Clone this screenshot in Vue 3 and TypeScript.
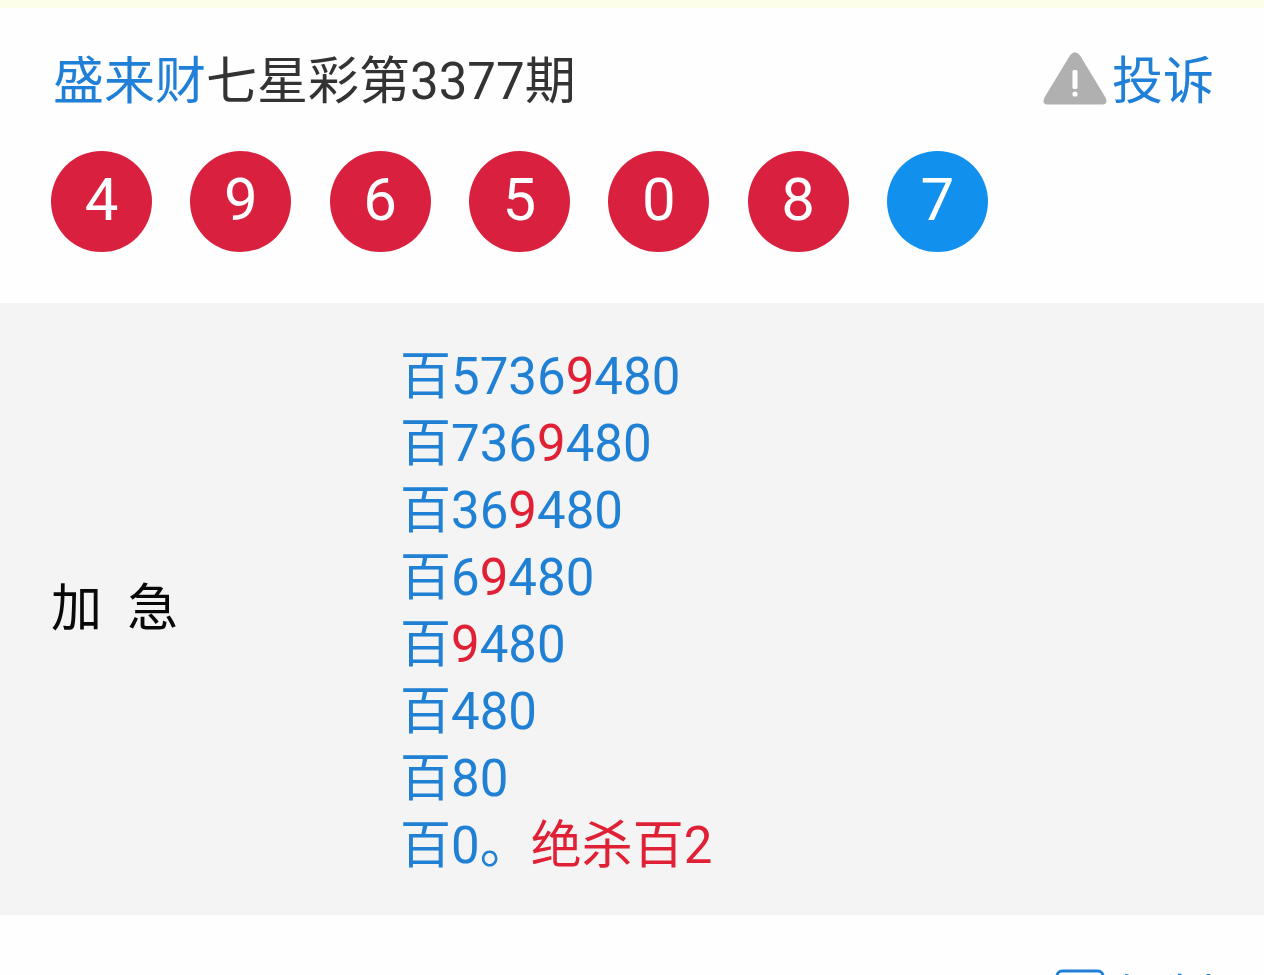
<script setup lang="ts">
interface Ball {
  value: number
  special?: boolean
}

interface Segment {
  text: string
  hot?: boolean
}

const balls: Ball[] = [
  { value: 4 },
  { value: 9 },
  { value: 6 },
  { value: 5 },
  { value: 0 },
  { value: 8 },
  { value: 7, special: true },
]

const lines: Segment[][] = [
  [{ text: '百5736' }, { text: '9', hot: true }, { text: '480' }],
  [{ text: '百736' }, { text: '9', hot: true }, { text: '480' }],
  [{ text: '百36' }, { text: '9', hot: true }, { text: '480' }],
  [{ text: '百6' }, { text: '9', hot: true }, { text: '480' }],
  [{ text: '百' }, { text: '9', hot: true }, { text: '480' }],
  [{ text: '百480' }],
  [{ text: '百80' }],
  [{ text: '百0。' }, { text: '绝杀百2', hot: true }],
]
</script>

<template>
  <main class="page">
    <header class="head">
      <h1 class="title"><a href="#author">盛来财</a>七星彩第3377期</h1>
      <a class="report" href="#report">
        <svg class="warn" viewBox="0 0 64 53" aria-hidden="true">
          <path
            d="M27.500 2.800Q32-2.200 36.500 2.800Q38 5 39.200 7L62.500 45.500Q65.500 52.300 59.500 52.500H4.500Q-1.500 52.300 1.500 45.500L24.800 7Q26 5 27.500 2.800Z"
            fill="#b0b0b0"
          />
          <rect x="29.500" y="18" width="5" height="19" rx="1.500" fill="#fff" />
          <circle cx="32" cy="42" r="2.600" fill="#fff" />
        </svg>
        <span>投诉</span>
      </a>
    </header>

    <ol class="balls">
      <li v-for="(ball, i) in balls" :key="i" class="ball" :class="{ special: ball.special }">
        {{ ball.value }}
      </li>
    </ol>

    <section class="plan">
      <h2 class="label">加&nbsp;&nbsp;急</h2>
      <div class="lines">
        <p v-for="(line, i) in lines" :key="i" class="line">
          <span v-for="(part, j) in line" :key="j" :class="{ hot: part.hot }">{{ part.text }}</span>
        </p>
      </div>
    </section>

    <footer class="foot">
      <button class="copy" type="button">
        <svg class="copy-icon" viewBox="0 0 50 50" aria-hidden="true">
          <rect x="2" y="2" width="46" height="46" rx="5" fill="none" stroke="currentColor" stroke-width="3" />
        </svg>
        <span class="copy-text">复制</span>
      </button>
    </footer>
  </main>
</template>

<style>
body {
  margin: 0;
}
</style>

<style scoped>
.page {
  box-sizing: border-box;
  height: 100vh;
  overflow: hidden;
  border-top: 8px solid #fcfee9;
  background: #fefefe;
  color: #333;
  font-family: Roboto, "Noto Sans CJK SC", sans-serif;
  font-size: 51px;
  line-height: 67px;
}

.head {
  display: flex;
  justify-content: space-between;
  align-items: center;
  padding: 40px 50px 0 53px;
}

.title,
.label {
  margin: 0;
  font-size: inherit;
  font-weight: 400;
}

a {
  color: #2080d8;
  text-decoration: none;
}

.report {
  display: flex;
  align-items: center;
  gap: 5px;
}

.warn {
  width: 64px;
  height: 53px;
  margin-bottom: 6px;
}

.balls {
  display: flex;
  justify-content: space-between;
  max-width: 937px;
  margin: 36px 51px 51px;
  padding: 0;
  list-style: none;
}

.ball {
  box-sizing: border-box;
  width: 101px;
  height: 101px;
  border-radius: 50%;
  background: #d9203e;
  color: #fff;
  font-size: 60px;
  line-height: 98px;
  text-align: center;
}

.ball.special {
  background: #1290ee;
}

.plan {
  display: grid;
  grid-template-columns: 349px 1fr;
  align-items: center;
  padding: 40px 51px 36px;
  background: #f4f4f4;
}

.label {
  padding-bottom: 6px;
  color: #080808;
}

.line {
  margin: 0;
  color: #2080d4;
}

.hot {
  color: #e02034;
}

.foot {
  display: flex;
  justify-content: flex-end;
  padding: 39px 50px;
}

.copy {
  display: flex;
  align-items: center;
  gap: 7px;
  padding: 0;
  border: 0;
  background: none;
  color: #2080d8;
  font: inherit;
}

.copy-icon {
  width: 50px;
  height: 50px;
}

.copy-text {
  margin-top: 12px;
}
</style>
